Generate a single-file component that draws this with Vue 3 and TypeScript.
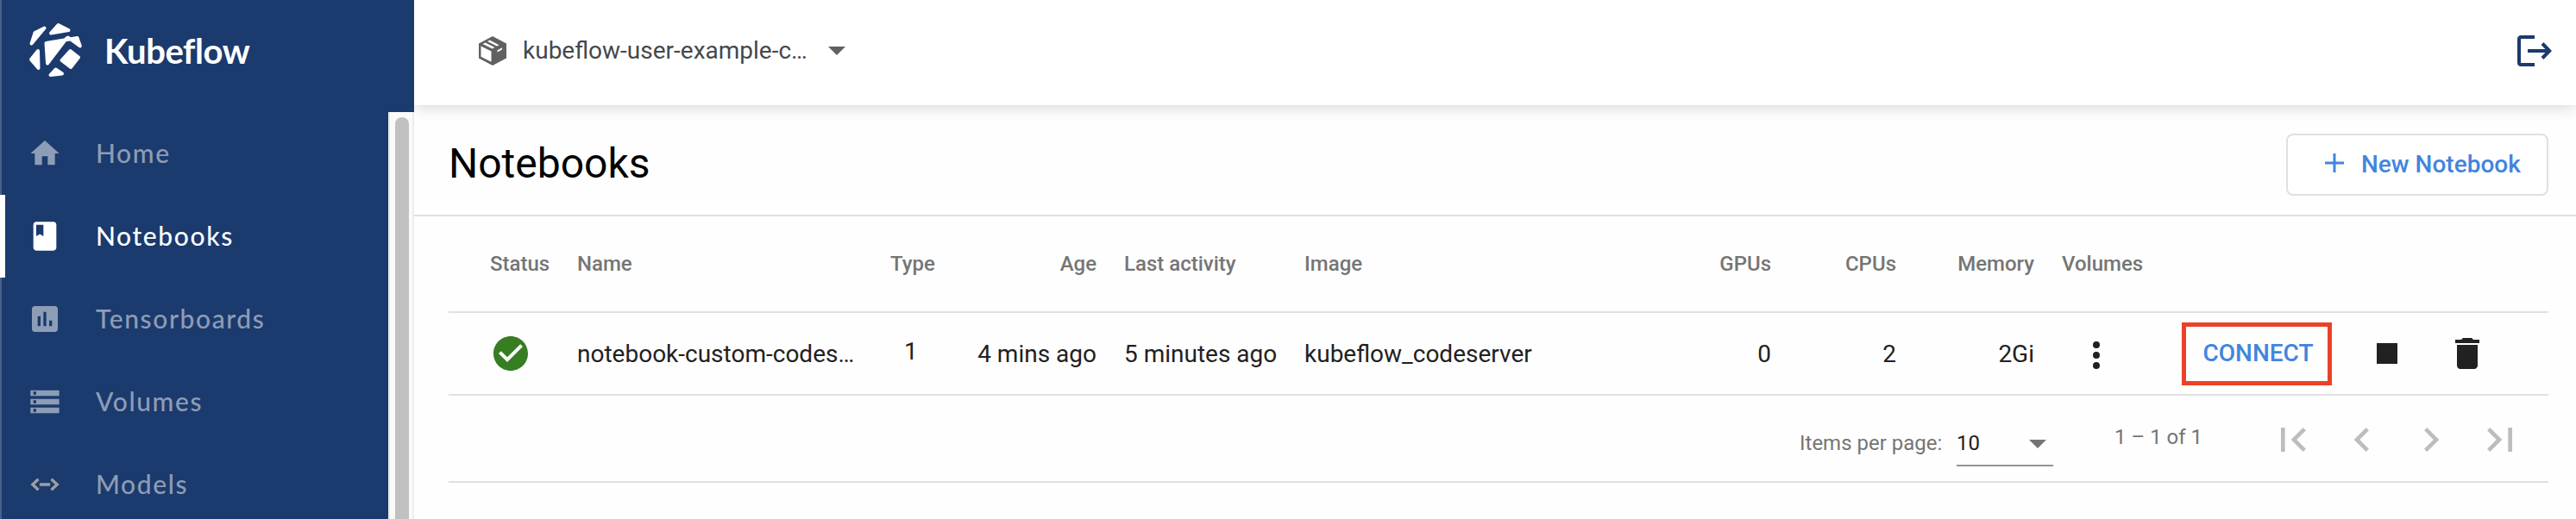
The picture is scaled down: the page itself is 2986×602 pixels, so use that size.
<script setup lang="ts">
interface NavItem {
  label: string
  icon: string
  active?: boolean
}

const navItems: NavItem[] = [
  { label: 'Home', icon: 'M10 20v-6h4v6h5v-8h3L12 3 2 12h3v8z' },
  {
    label: 'Notebooks',
    icon: 'M18 2H6c-1.1 0-2 .9-2 2v16c0 1.1.9 2 2 2h12c1.1 0 2-.9 2-2V4c0-1.1-.9-2-2-2zM6 4h5v8l-2.5-1.5L6 12V4z',
    active: true,
  },
  {
    label: 'Tensorboards',
    icon: 'M19 3H5c-1.1 0-2 .9-2 2v14c0 1.1.9 2 2 2h14c1.1 0 2-.9 2-2V5c0-1.1-.9-2-2-2zM9 17H7v-7h2v7zm4 0h-2V7h2v10zm4 0h-2v-4h2v4z',
  },
  {
    label: 'Volumes',
    icon: 'M2 20h20v-4H2v4zm2-3h2v2H4v-2zM2 4v4h20V4H2zm4 3H4V5h2v2zm-4 7h20v-4H2v4zm2-3h2v2H4v-2z',
  },
  { label: 'Models', icon: '' },
]

const pagerIcons: string[] = [
  'M18.41 16.59L13.82 12l4.59-4.59L17 6l-6 6 6 6zM6 6h2v12H6z',
  'M15.41 7.41L14 6l-6 6 6 6 1.41-1.41L10.83 12z',
  'M10 6L8.59 7.41 13.17 12l-4.58 4.59L10 18l6-6z',
  'M5.59 7.41L10.18 12l-4.59 4.59L7 18l6-6-6-6zM16 6h2v12h-2z',
]
</script>

<template>
  <div class="app">
    <aside class="sidebar">
      <div class="brand">
        <svg class="logo" viewBox="0 0 64 66">
          <g fill="#fff" stroke="#fff" stroke-width="4" stroke-linejoin="round">
            <path d="M18.500 6.500L7.500 12 3.500 24.500z" />
            <path d="M34.500 3L46.500 9 26 12.500z" />
            <path d="M20.500 24L56.500 18 59.800 27.500 46 17.500 44 18.500 22 47.500z" />
            <path d="M11 33L3 43 11.500 53z" />
            <path d="M48.500 33L58 40.500 49 52 38.500 44z" />
            <path d="M31.500 54.500L39 59.500 25.500 61z" />
          </g>
        </svg>
        <span class="brand-name">Kubeflow</span>
      </div>
      <div class="nav-wrap">
        <nav class="nav">
          <a v-for="item in navItems" :key="item.label" class="nav-item" :class="{ active: item.active }">
            <svg v-if="item.icon" class="nav-icon" viewBox="0 0 24 24"><path :d="item.icon" /></svg>
            <svg v-else class="nav-icon models" viewBox="0 0 24 24">
              <path d="M7.500 8.300L3.500 12 7.500 15.700M16.500 8.300L20.500 12 16.500 15.700M8.300 12h7.400" />
            </svg>
            <span>{{ item.label }}</span>
          </a>
        </nav>
        <div class="scrollbar"><div class="thumb"></div></div>
      </div>
    </aside>

    <main class="main">
      <header class="topbar">
        <svg class="package" viewBox="0 0 32 34">
          <path fill="#5f6163" d="M16 0L32 8.500V25.500L16 34 0 25.500V8.500z" />
          <path fill="#fff" d="M2.500 11.500L14.500 17.500V29.800L2.500 23.800z" />
          <path fill="#fff" d="M4.500 9L7.500 7.400 18.500 13 15.700 14.500zM10 6L12.600 4.600 23.500 10.200 21 11.600z" />
          <path fill="#fff" d="M21.500 16.200L27 13.200V15.400L21.500 18.400z" />
        </svg>
        <span class="namespace">kubeflow-user-example-c…</span>
        <span class="caret"></span>
        <svg class="logout" viewBox="0 0 40 36">
          <path d="M20 2H4.500Q2 2 2 4.500V31.500Q2 34 4.500 34H20M12 18H37M29 9.500L37.200 18 29 26.500" />
        </svg>
      </header>

      <section class="title-row">
        <h1>Notebooks</h1>
        <button class="new-btn">
          <svg class="plus" viewBox="0 0 22 22"><path d="M11 0V22M0 11H22" /></svg>
          <span>New Notebook</span>
        </button>
      </section>

      <section class="table">
        <div class="row head">
          <span>Status</span>
          <span>Name</span>
          <span>Type</span>
          <span class="right">Age</span>
          <span class="after">Last activity</span>
          <span>Image</span>
          <span class="right">GPUs</span>
          <span class="right">CPUs</span>
          <span class="right">Memory</span>
          <span class="after">Volumes</span>
        </div>
        <div class="row body">
          <svg class="status" viewBox="0 0 24 24">
            <path fill="#377d22" d="M12 2C6.480 2 2 6.480 2 12s4.480 10 10 10 10-4.480 10-10S17.520 2 12 2zm-2 15l-5-5 1.410-1.410L10 14.170l7.590-7.590L19 8l-9 9z" />
          </svg>
          <span>notebook-custom-codes…</span>
          <span class="type">1</span>
          <span class="right">4 mins ago</span>
          <span class="after">5 minutes ago</span>
          <span>kubeflow_codeserver</span>
          <span class="right">0</span>
          <span class="right">2</span>
          <span class="right">2Gi</span>
          <svg class="more" viewBox="0 0 8 32">
            <circle cx="4" cy="4" r="4" /><circle cx="4" cy="16" r="4" /><circle cx="4" cy="28" r="4" />
          </svg>
          <div class="connect"><span>CONNECT</span></div>
          <svg class="action" viewBox="0 0 24 24"><path d="M6 6h12v12H6z" /></svg>
          <svg class="action" viewBox="0 0 24 24">
            <path d="M6 19c0 1.100.9 2 2 2h8c1.100 0 2-.9 2-2V7H6v12zM19 4h-3.500l-1-1h-5l-1 1H5v2h14V4z" />
          </svg>
        </div>
        <div class="pager">
          <span class="per-page">Items per page:</span>
          <div class="select"><span>10</span><i class="caret small"></i></div>
          <span class="range">1 – 1 of 1</span>
          <div class="pager-buttons">
            <svg v-for="d in pagerIcons" :key="d" viewBox="0 0 24 24"><path :d="d" /></svg>
          </div>
        </div>
      </section>
    </main>
  </div>
</template>

<style>
body {
  margin: 0;
  overflow: hidden;
}
</style>

<style scoped>
* {
  box-sizing: border-box;
}
.app {
  display: flex;
  width: 2986px;
  height: 602px;
  overflow: hidden;
  background: #fefefe;
  font-family: Roboto, "Liberation Sans", sans-serif;
  color: #212121;
}
svg {
  display: block;
  flex: none;
}
.sidebar {
  width: 480px;
  height: 602px;
  flex: none;
  background: #1b3a6d;
  display: flex;
  flex-direction: column;
  color: #fff;
  font-family: Lato, sans-serif;
  box-shadow: inset 2px 0 #49618a;
}
.brand {
  height: 130px;
  flex: none;
  display: flex;
  padding: 26px 0 0 33px;
}
.logo {
  width: 64px;
  height: 66px;
}
.brand-name {
  margin-left: 24px;
  font-size: 40px;
  font-weight: 700;
  letter-spacing: -0.4px;
  line-height: 66px;
}
.nav-wrap {
  flex: 1;
  min-height: 0;
  display: flex;
}
.nav {
  width: 450px;
  height: 472px;
  overflow: hidden;
}
.nav-item {
  height: 96px;
  display: flex;
  align-items: center;
  padding-left: 32px;
  font-size: 30px;
  font-weight: 500;
  letter-spacing: 1.6px;
  color: rgba(255, 255, 255, 0.5);
}
.nav-item span {
  margin: 0 0 2px 39px;
}
.nav-item.active {
  color: #fff;
  border-left: 6px solid #fff;
  padding-left: 26px;
}
.nav-icon {
  width: 40px;
  height: 40px;
  fill: currentColor;
}
.nav-icon.models {
  fill: none;
  stroke: #9b9fa3;
  stroke-width: 2;
}
.scrollbar {
  width: 30px;
  background: #fafafa;
  border-left: 2px solid #e8e8e8;
  border-right: 2px solid #ededed;
  padding: 6px 4px 0 6px;
}
.thumb {
  height: 480px;
  border-radius: 8px;
  background: #c1c1c1;
}
.main {
  flex: 1;
  min-width: 0;
}
.topbar {
  height: 122px;
  display: flex;
  align-items: center;
  padding: 0 28px 4px 75px;
  background: #fff;
  box-shadow: 0 2px 16px rgba(60, 64, 80, 0.22);
  clip-path: inset(0 0 -30px 0);
}
.package {
  width: 32px;
  height: 34px;
}
.namespace {
  width: 354px;
  margin: 0 0 2px 19px;
  font-size: 28px;
  color: #46484b;
}
.caret {
  border: 10px solid transparent;
  border-top-color: #5f6163;
  border-bottom: 0;
}
.logout {
  width: 40px;
  height: 36px;
  margin-left: auto;
  fill: none;
  stroke: #1b3a6d;
  stroke-width: 4;
}
.title-row {
  height: 129px;
  display: flex;
  justify-content: space-between;
  padding: 33px 32px 0 40px;
  border-bottom: 2px solid #e0e0e0;
}
h1 {
  margin: 0;
  font-size: 48px;
  font-weight: 400;
  line-height: 70px;
  color: #000;
}
.new-btn {
  width: 304px;
  height: 72px;
  border: 2px solid #e0e0e0;
  border-radius: 8px;
  background: #fff;
  display: flex;
  align-items: center;
  padding: 0 0 0 43px;
  color: #4285dd;
  font: 500 28px Roboto, sans-serif;
}
.plus {
  width: 22px;
  height: 22px;
  margin-bottom: 4px;
  stroke: currentColor;
  stroke-width: 3;
}
.new-btn span {
  margin: 0 0 2px 20px;
}
.table {
  margin: 0 32px 0 40px;
}
.row {
  display: grid;
  grid-template-columns: 101px 363px 88px 151px 241px 388px 153px 145px 160px 171px 174px 102px 110px;
  align-items: center;
  padding-left: 48px;
  border-bottom: 2px solid #e0e0e0;
  white-space: nowrap;
}
.head {
  height: 112px;
  font-size: 24px;
  font-weight: 500;
  color: #757575;
}
.body {
  height: 96px;
  font-size: 28px;
}
.right {
  text-align: right;
}
.after {
  padding-left: 32px;
}
.status {
  width: 48px;
  height: 48px;
}
.type {
  padding: 0 0 6px 16px;
}
.more {
  width: 8px;
  height: 32px;
  margin: 4px 0 0 68px;
  fill: #212121;
}
.connect {
  height: 73px;
  border: 5px solid #ea4228;
  display: flex;
  align-items: center;
  justify-content: center;
  padding: 0 0 2px 3px;
  color: #4285dd;
  font-weight: 500;
}
.action {
  width: 48px;
  height: 48px;
  margin-left: 40px;
  fill: #212121;
}
.action:last-child {
  margin-left: 31px;
}
.pager {
  height: 101px;
  display: flex;
  border-bottom: 2px solid #e0e0e0;
  color: #757575;
  font-size: 24px;
  padding-left: 1566px;
}
.per-page {
  width: 182px;
  line-height: 28px;
  padding-top: 41px;
}
.select {
  width: 112px;
  height: 82px;
  border-bottom: 2px solid #949494;
  padding: 41px 8px 0 0;
  display: flex;
  justify-content: space-between;
  color: #212121;
  line-height: 28px;
}
.caret.small {
  height: 10px;
  margin-top: 10px;
  border-top-color: #757575;
}
.range {
  width: 238px;
  padding: 34px 0 0 71px;
  line-height: 28px;
}
.pager-buttons {
  display: flex;
  gap: 24px;
  padding: 23px 0 0 12px;
}
.pager-buttons svg {
  width: 56px;
  height: 56px;
  fill: #bdbdbd;
}
</style>
